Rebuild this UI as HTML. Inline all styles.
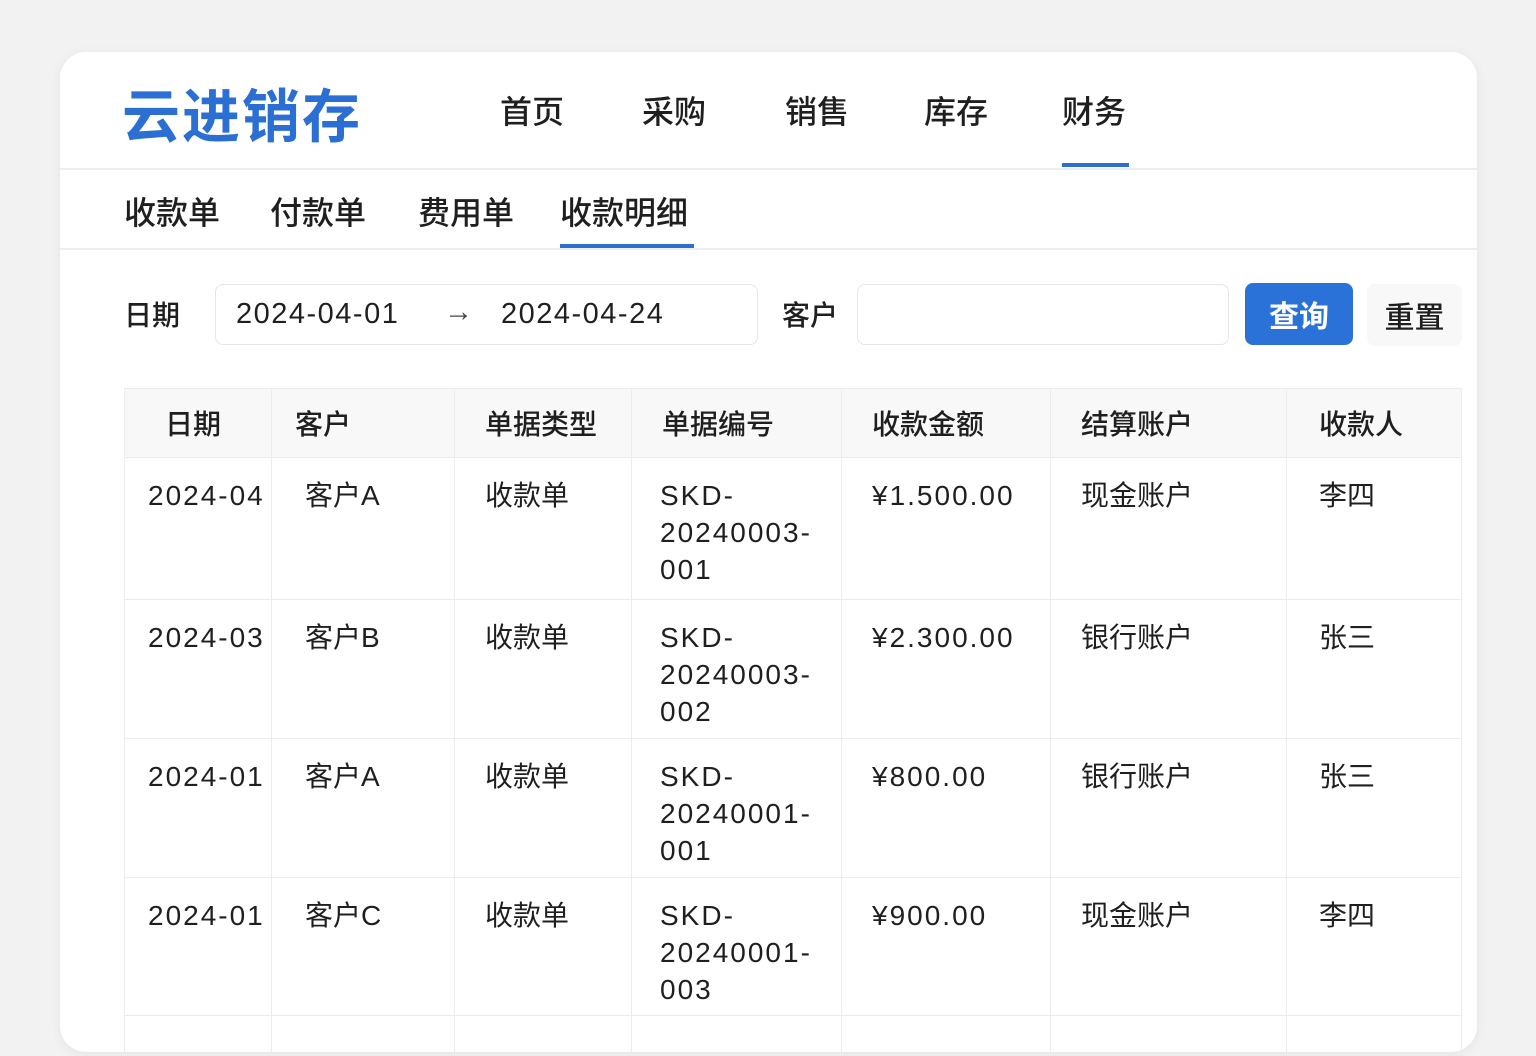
<!DOCTYPE html>
<html><head><meta charset="utf-8"><style>
*{box-sizing:border-box;margin:0;padding:0}
body{width:1536px;height:1024px;background:#f2f2f2;font-family:"Liberation Sans","Noto Sans CJK SC",sans-serif;color:#1f1f1f;overflow:hidden;position:relative}
.card{position:absolute;left:60px;top:52px;width:1417px;height:1000px;background:#fff;border-radius:26px;box-shadow:0 2px 12px rgba(0,0,0,.06)}
.abs{position:absolute;white-space:nowrap}
.logo{left:62px;top:18px;font-size:58px;font-weight:700;color:#2b6fd3;letter-spacing:2px;font-family:"Noto Sans CJK SC",sans-serif}
.nav{top:35px;font-size:32px;font-weight:500;font-family:"Noto Sans CJK SC",sans-serif}
.line{position:absolute;left:0;right:0;height:2px;background:#eee}
.sub{top:136px;font-size:32px;font-weight:500;font-family:"Noto Sans CJK SC",sans-serif}
.ul{position:absolute;height:4px;background:#2b6fd3}
.lbl{font-size:28px;font-weight:500;font-family:"Noto Sans CJK SC",sans-serif}
.inp{position:absolute;border:1.5px solid #e6e6e6;border-radius:8px;background:#fff}
table{position:absolute;left:64px;top:336px;border-collapse:collapse;font-size:28px;font-family:"Liberation Sans","Noto Sans CJK SC",sans-serif}
td,th{border:1px solid #ececec;vertical-align:top;text-align:left;padding:0 0 0 23px;line-height:37px}
th{height:69px;background:#f8f8f8;font-weight:500;vertical-align:middle;font-family:"Noto Sans CJK SC",sans-serif}
td{padding-top:19px}
.n{letter-spacing:2px}
</style></head><body>
<div class="card">
<div class="abs logo">云进销存</div>
<div class="abs nav" style="left:440px">首页</div>
<div class="abs nav" style="left:582px">采购</div>
<div class="abs nav" style="left:725px">销售</div>
<div class="abs nav" style="left:864px">库存</div>
<div class="abs nav" style="left:1002px">财务</div>
<div class="ul" style="left:1002px;top:111px;width:67px"></div>
<div class="line" style="top:116px"></div>
<div class="abs sub" style="left:64px">收款单</div>
<div class="abs sub" style="left:210px">付款单</div>
<div class="abs sub" style="left:358px">费用单</div>
<div class="abs sub" style="left:500px">收款明细</div>
<div class="ul" style="left:500px;top:192px;width:134px"></div>
<div class="line" style="top:196px"></div>
<div class="abs lbl" style="left:64px;top:242px">日期</div>
<div class="inp" style="left:155px;top:232px;width:543px;height:61px"></div>
<div class="abs" style="left:176px;top:246px;font-size:29px;letter-spacing:1.5px">2024-04-01</div>
<div class="abs" style="left:384px;top:244px;font-size:29px;color:#444">→</div>
<div class="abs" style="left:441px;top:246px;font-size:29px;letter-spacing:1.5px">2024-04-24</div>
<div class="abs lbl" style="left:722px;top:242px">客户</div>
<div class="inp" style="left:797px;top:232px;width:372px;height:61px"></div>
<div class="abs lbl" style="left:1185px;top:231px;width:108px;height:62px;background:#2b72d8;color:#fff;border-radius:8px;text-align:center;line-height:62px;font-size:30px;font-weight:700">查询</div>
<div class="abs lbl" style="left:1307px;top:232px;width:95px;height:62px;background:#f8f8f8;border-radius:8px;text-align:center;line-height:62px;font-size:30px">重置</div>
<table>
<tr><th style="width:147px;padding-left:40px">日期</th><th style="width:183px">客户</th><th style="width:177px;padding-left:30px">单据类型</th><th style="width:210px;padding-left:30px">单据编号</th><th style="width:209px;padding-left:30px">收款金额</th><th style="width:236px;padding-left:30px">结算账户</th><th style="width:175px;padding-left:32px">收款人</th></tr>
<tr style="height:142px"><td class="n">2024-04</td><td style="padding-left:33px">客户A</td><td style="padding-left:30px">收款单</td><td class="n" style="padding-left:28px">SKD-<br>20240003-<br>001</td><td class="n" style="padding-left:30px">¥1.500.00</td><td style="padding-left:30px">现金账户</td><td style="padding-left:32px">李四</td></tr>
<tr style="height:139px"><td class="n">2024-03</td><td style="padding-left:33px">客户B</td><td style="padding-left:30px">收款单</td><td class="n" style="padding-left:28px">SKD-<br>20240003-<br>002</td><td class="n" style="padding-left:30px">¥2.300.00</td><td style="padding-left:30px">银行账户</td><td style="padding-left:32px">张三</td></tr>
<tr style="height:139px"><td class="n">2024-01</td><td style="padding-left:33px">客户A</td><td style="padding-left:30px">收款单</td><td class="n" style="padding-left:28px">SKD-<br>20240001-<br>001</td><td class="n" style="padding-left:30px">¥800.00</td><td style="padding-left:30px">银行账户</td><td style="padding-left:32px">张三</td></tr>
<tr style="height:138px"><td class="n">2024-01</td><td style="padding-left:33px">客户C</td><td style="padding-left:30px">收款单</td><td class="n" style="padding-left:28px">SKD-<br>20240001-<br>003</td><td class="n" style="padding-left:30px">¥900.00</td><td style="padding-left:30px">现金账户</td><td style="padding-left:32px">李四</td></tr>
<tr style="height:40px"><td></td><td></td><td></td><td></td><td></td><td></td><td></td></tr>
</table>
</div>
</body></html>
